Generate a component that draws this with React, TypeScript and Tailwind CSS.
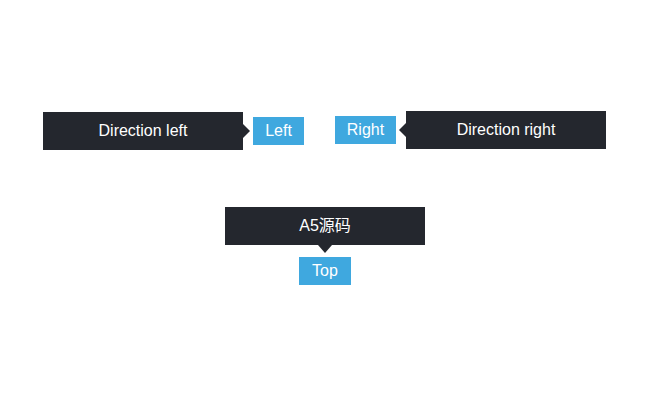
export default function App() {
  const font = { fontFamily: '"Liberation Sans", Arial, "Noto Sans CJK SC", sans-serif' };
  return (
    <div className="w-[650px] h-[400px] bg-white text-white text-[16px]" style={font}>
      <div className="flex items-start pt-[111px]">
        {/* left direction */}
        <div className="ml-[43px] mt-[1px] flex items-center gap-[10px]">
          <div className="relative flex h-[38px] w-[200px] items-center justify-center bg-[#24272e]">
            Direction left
            <span className="absolute left-full top-1/2 -translate-y-1/2 border-y-[7px] border-l-[7px] border-y-transparent border-l-[#24272e]" />
          </div>
          <div className="flex h-[28px] w-[51px] items-center justify-center bg-[#3fa8df]">Left</div>
        </div>

        {/* right direction */}
        <div className="ml-[31px] flex items-center gap-[10px]">
          <div className="flex h-[28px] w-[61px] items-center justify-center bg-[#3fa8df]">Right</div>
          <div className="relative flex h-[38px] w-[200px] items-center justify-center bg-[#24272e]">
            Direction right
            <span className="absolute right-full top-1/2 -translate-y-1/2 border-y-[7px] border-r-[7px] border-y-transparent border-r-[#24272e]" />
          </div>
        </div>
      </div>

      {/* top direction */}
      <div className="mt-[57px] flex flex-col items-center gap-[12px]">
        <div className="relative flex h-[38px] w-[200px] items-center justify-center bg-[#24272e]">
          A5源码
          <span className="absolute left-1/2 top-full -translate-x-1/2 border-x-[7px] border-t-[8px] border-x-transparent border-t-[#24272e]" />
        </div>
        <div className="flex h-[28px] w-[52px] items-center justify-center bg-[#3fa8df]">Top</div>
      </div>
    </div>
  );
}
